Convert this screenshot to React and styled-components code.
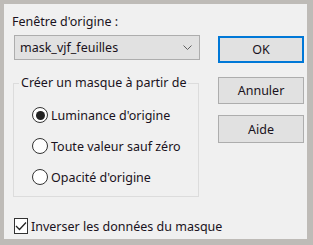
import styled, { createGlobalStyle } from 'styled-components';

const GlobalStyle = createGlobalStyle`
  html, body {
    margin: 0;
    padding: 0;
    background: #bebbb7;
  }
  body {
    font-family: "Noto Sans", "Open Sans", sans-serif;
    font-size: 12.5px;
    color: #1a1220;
  }
`;

const Frame = styled.div`
  width: 313px;
  height: 245px;
  box-sizing: border-box;
  padding: 4px 6px 6px 4px;
  background: #bebbb7;
`;

const Panel = styled.div`
  height: 100%;
  box-sizing: border-box;
  background: #f0f0f0;
  display: flex;
  justify-content: space-between;
  padding: 9px 3px 0 9px;
`;

const LeftColumn = styled.div`
  width: 187px;
  display: flex;
  flex-direction: column;
  white-space: nowrap;
`;

const Label = styled.div`
  line-height: 18px;
  margin-left: -1px;
`;

const Select = styled.div`
  margin: 4px 0 0 1px;
  height: 25px;
  box-sizing: border-box;
  border: 1px solid #adadad;
  background: #e1e1e1;
  display: flex;
  align-items: center;
  justify-content: space-between;
  padding: 0 7px 0 5px;
`;

const Group = styled.fieldset`
  margin: 14px 0 0 0;
  padding: 0;
  width: 186px;
  height: 123px;
  box-sizing: border-box;
  border: 1px solid #dcdcdc;

  legend {
    padding: 0 2px;
    margin-left: 5px;
    line-height: 18px;
  }
`;

const OptionList = styled.div`
  display: flex;
  flex-direction: column;
  gap: 13px;
  padding: 14px 0 0 18px;
`;

const Option = styled.label`
  display: flex;
  align-items: center;
  height: 18px;
  gap: 3px;
`;

const Radio = styled.span`
  width: 16px;
  height: 16px;
  box-sizing: border-box;
  border-radius: 50%;
  border: 1px solid #333;
  background: #fff;
  display: flex;
  align-items: center;
  justify-content: center;

  &::after {
    content: '';
    width: 9px;
    height: 9px;
    border-radius: 50%;
    background: ${({ $checked }) => ($checked ? '#222' : 'transparent')};
  }
`;

const CheckRow = styled.label`
  display: flex;
  align-items: center;
  gap: 3px;
  margin: 21px 0 0 1px;
  height: 16px;
`;

const Checkbox = styled.span`
  width: 16px;
  height: 16px;
  box-sizing: border-box;
  border: 1px solid #333;
  background: #fff;
  display: flex;
  align-items: center;
  justify-content: center;
`;

const ButtonColumn = styled.div`
  width: 86px;
  display: flex;
  flex-direction: column;
  padding-top: 23px;
`;

const Button = styled.div`
  height: ${({ $h }) => $h || 27}px;
  margin-top: ${({ $mt }) => $mt || 0}px;
  box-sizing: border-box;
  border: ${({ $primary }) => ($primary ? '2px solid #0078d7' : '1px solid #adadad')};
  background: #e1e1e1;
  display: flex;
  align-items: center;
  justify-content: center;
`;

const Chevron = () => (
  <svg width="9" height="5" viewBox="0 0 9 5">
    <path d="M0.5 0.5 L4.5 4.5 L8.5 0.5" fill="none" stroke="#606060" strokeWidth="1" />
  </svg>
);

const Check = () => (
  <svg width="12" height="10" viewBox="0 0 12 10">
    <path d="M1 5 L4.5 8.5 L11 1.5" fill="none" stroke="#222" strokeWidth="1.3" />
  </svg>
);

const options = [
  { label: "Luminance d'origine", checked: true },
  { label: 'Toute valeur sauf zéro', checked: false },
  { label: "Opacité d'origine", checked: false },
];

export default function App() {
  return (
    <Frame>
      <GlobalStyle />
      <Panel>
        <LeftColumn>
          <Label>Fenêtre d'origine :</Label>
          <Select>
            <span>mask_vjf_feuilles</span>
            <Chevron />
          </Select>
          <Group>
            <legend>Créer un masque à partir de</legend>
            <OptionList>
              {options.map((o) => (
                <Option key={o.label}>
                  <Radio $checked={o.checked} />
                  {o.label}
                </Option>
              ))}
            </OptionList>
          </Group>
          <CheckRow>
            <Checkbox>
              <Check />
            </Checkbox>
            Inverser les données du masque
          </CheckRow>
        </LeftColumn>
        <ButtonColumn>
          <Button $primary>OK</Button>
          <Button $mt={14}>Annuler</Button>
          <Button $mt={11} $h={28}>Aide</Button>
        </ButtonColumn>
      </Panel>
    </Frame>
  );
}
